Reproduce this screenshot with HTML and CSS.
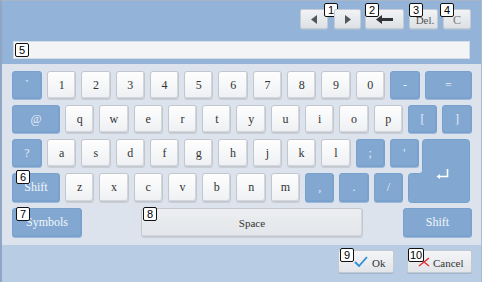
FILE: index.html
```html
<!DOCTYPE html>
<html>
<head>
<meta charset="utf-8">
<link rel="stylesheet" href="styles.css">
</head>
<body>
<div class="screen">
  <div class="topbar">
    <div class="tools">
      <div class="tbtn w28"><svg width="6" height="9" viewBox="0 0 6 9"><path d="M6 0 L0 4.5 L6 9 Z" fill="#555"/></svg><span class="tag t1">1</span></div>
      <div class="tbtn w27 g6"><svg width="6" height="9" viewBox="0 0 6 9"><path d="M0 0 L6 4.5 L0 9 Z" fill="#555"/></svg></div>
      <div class="tbtn w39 g4"><svg width="17" height="9" viewBox="0 0 17 9"><path d="M0 4.5 L6 0 L6 3 L17 3 L17 6 L6 6 L6 9 Z" fill="#333"/></svg><span class="tag t2">2</span></div>
      <div class="tbtn w29 g5 txt del">Del.<span class="tag t3">3</span></div>
      <div class="tbtn w28 g5 txt light">C<span class="tag t4">4</span></div>
    </div>
    <div class="input"><span class="tag inl">5</span></div>
  </div>
  <div class="panel">
    <div class="row">
      <div class="key blue w30">`</div>
      <div class="key">1</div><div class="key">2</div><div class="key">3</div><div class="key">4</div><div class="key">5</div>
      <div class="key">6</div><div class="key">7</div><div class="key">8</div><div class="key">9</div><div class="key">0</div>
      <div class="key blue w30">-</div>
      <div class="key blue w47">=</div>
    </div>
    <div class="row">
      <div class="key blue w48">@</div>
      <div class="key">q</div><div class="key">w</div><div class="key">e</div><div class="key">r</div><div class="key">t</div>
      <div class="key">y</div><div class="key">u</div><div class="key">i</div><div class="key">o</div><div class="key">p</div>
      <div class="key blue">[</div>
      <div class="key blue">]</div>
    </div>
    <div class="pair">
      <div class="row r3">
        <div class="key blue w30">?</div>
        <div class="key">a</div><div class="key">s</div><div class="key">d</div><div class="key">f</div><div class="key">g</div>
        <div class="key">h</div><div class="key">j</div><div class="key">k</div><div class="key">l</div>
        <div class="key blue">;</div>
        <div class="key blue">'</div>
      </div>
      <div class="row r4">
        <div class="key blue w48 word">Shift<span class="tag t6">6</span></div>
        <div class="key">z</div><div class="key">x</div><div class="key">c</div><div class="key">v</div><div class="key">b</div>
        <div class="key">n</div><div class="key">m</div>
        <div class="key blue">,</div>
        <div class="key blue">.</div>
        <div class="key blue">/</div>
      </div>
      <div class="enter">
        <svg width="62" height="64" viewBox="0 0 62 64">
          <path d="M17.5 0.5 H58.5 Q61.5 0.5 61.5 3.5 V60.5 Q61.5 63.5 58.5 63.5 H3.5 Q0.5 63.5 0.5 60.5 V37.5 Q0.5 34.5 3.5 34.5 H11.5 Q14.5 34.5 14.5 31.5 V3.5 Q14.5 0.5 17.5 0.5 Z" fill="#82a8d2" stroke="#76a0cc"/>
          <path d="M39.5 30 V37.5 H30" fill="none" stroke="#fff" stroke-width="1.6"/>
          <path d="M28.5 37.5 L32 35 L32 40 Z" fill="#fff"/>
        </svg>
      </div>
    </div>
    <div class="row last">
      <div class="key blue w70 word">Symbols<span class="tag t7">7</span></div>
      <div class="key space">Space<span class="tag t8">8</span></div>
      <div class="key blue w69 word shift2">Shift</div>
    </div>
  </div>
  <div class="bottom">
    <div class="bbtn ok">
      <svg width="14" height="11" viewBox="0 0 14 11"><path d="M1 6 L5 10 L13 1" fill="none" stroke="#2f8fd8" stroke-width="1.8"/></svg>
      <span>Ok</span><span class="tag t9">9</span>
    </div>
    <div class="bbtn cancel">
      <svg width="12" height="10" viewBox="0 0 12 10"><path d="M1 1 L11 9 M11 1 L1 9" fill="none" stroke="#e5322d" stroke-width="1.5"/></svg>
      <span>Cancel</span><span class="tag t10">10</span>
    </div>
  </div>
</div>
</body>
</html>
```

FILE: styles.css
```css
* { box-sizing: border-box; }
html, body { margin: 0; padding: 0; }
body {
  width: 482px;
  height: 282px;
  overflow: hidden;
  font-family: "Liberation Serif", serif;
  background: #b8cce4;
}
.screen {
  width: 482px;
  height: 282px;
  display: flex;
  flex-direction: column;
  border-left: 2px solid #8fa7c4;
  border-top: 1px solid #a7b6c6;
  border-right: 1px solid #a9bbd0;
}
.topbar {
  height: 63px;
  background: #93b4d8;
  padding-top: 8px;
}
.tools {
  display: flex;
  justify-content: flex-end;
  padding-right: 10px;
  height: 20px;
}
.tbtn {
  position: relative;
  height: 20px;
  border: 1px solid #c4cbd3;
  border-radius: 2px;
  background: linear-gradient(#f1f3f5, #dde1e5);
  display: flex;
  align-items: center;
  justify-content: center;
  box-shadow: 0 1px 0 #a9bed6;
}
.tbtn.txt { font-size: 11px; color: #555; padding-top: 2px; }
.tbtn.del { padding-left: 3px; }
.tbtn.light { color: #777; font-size: 12px; }
.w27 { width: 27px; }
.w28 { width: 28px; }
.w29 { width: 29px; }
.w39 { width: 39px; }
.g4 { margin-left: 4px; }
.g5 { margin-left: 5px; }
.g6 { margin-left: 6px; }
.input {
  margin: 12px 11px 0 11px;
  height: 18px;
  background: #f3f4f6;
  border: 1px solid #d5dce5;
  display: flex;
  align-items: center;
  padding-left: 1px;
}
.tag {
  position: absolute;
  height: 14px;
  min-width: 14px;
  padding: 0 1px;
  background: #fff;
  border: 1px solid #111;
  border-radius: 2px;
  font-family: "Liberation Sans", Arial, sans-serif;
  font-size: 11px;
  line-height: 12px;
  color: #000;
  text-align: center;
}
.tag.inl { position: static; }
.t1 { left: 23px; top: -7px; }
.t2 { left: -1px; top: -7px; }
.t3 { left: -1px; top: -7px; }
.t4 { left: -4px; top: -7px; }
.t6 { left: 3px; top: -4px; }
.t7 { left: 3px; top: -2px; }
.t8 { left: 1px; top: -2px; }
.t9 { left: 1px; top: -3px; }
.t10 { left: 0px; top: -3px; }

.panel {
  height: 181px;
  background: #dce3ed;
  padding: 7px 0 0 10px;
  display: flex;
  flex-direction: column;
  gap: 6px;
}
.row {
  display: flex;
  gap: 5px;
  height: 28px;
}
.key {
  position: relative;
  width: 29.3px;
  height: 100%;
  border: 1px solid #c2c7ce;
  border-radius: 3px;
  background: linear-gradient(#fefefe, #eef0f3);
  box-shadow: inset -1px -1px 0 #d3d7dd, 0 1px 0 #c9ced6;
  display: flex;
  align-items: center;
  justify-content: center;
  font-size: 12px;
  color: #333;
}
.key.blue {
  background: #82a8d2;
  border-color: #79a1cd;
  box-shadow: inset -1px -1px 0 #7ba2cc, 0 1px 0 #9db8d8;
  color: #e6eef7;
}
.key.word { font-size: 12px; color: #f2f6fb; }
.w30 { width: 30px; }
.w47 { width: 47px; }
.w48 { width: 48px; }
.w69 { width: 69px; }
.w70 { width: 70px; }
.pair {
  display: grid;
  grid-template-columns: 398px 9px 5px 47px;
  grid-template-rows: 28px 29px;
  row-gap: 6px;
}
.r3 { grid-column: 1 / 3; grid-row: 1; }
.r4 { grid-column: 1; grid-row: 2; height: 29px; }
.enter { grid-column: 2 / 5; grid-row: 1 / 3; margin-left: -2px; }
.enter svg { display: block; }
.row.last { height: 29px; gap: 0; }
.key.space {
  width: 222px;
  margin-left: 59px;
  background: linear-gradient(#eceef1, #e3e6ea);
  border-color: #c3c8cf;
  font-size: 11px;
  color: #333;
}
.shift2 { margin-left: 40px; }

.bottom {
  flex: 1;
  background: #b8cce4;
  display: flex;
  justify-content: flex-end;
  padding: 5px 9px 0 0;
  gap: 13px;
}
.bbtn {
  position: relative;
  height: 23px;
  border: 1px solid #c3c9d0;
  border-radius: 2px;
  background: linear-gradient(#f4f5f7, #e2e5e9);
  box-shadow: 0 1px 0 #9fb5d0;
  display: flex;
  align-items: center;
  font-size: 11px;
  color: #333;
}
.bbtn.ok { width: 56px; padding-left: 15px; gap: 4px; }
.bbtn.ok span:first-of-type { margin-top: 3px; }
.bbtn.cancel { width: 65px; padding-left: 10px; gap: 3px; }
.bbtn.cancel span:first-of-type { margin-top: 3px; }
.bbtn svg { display: block; }
```
